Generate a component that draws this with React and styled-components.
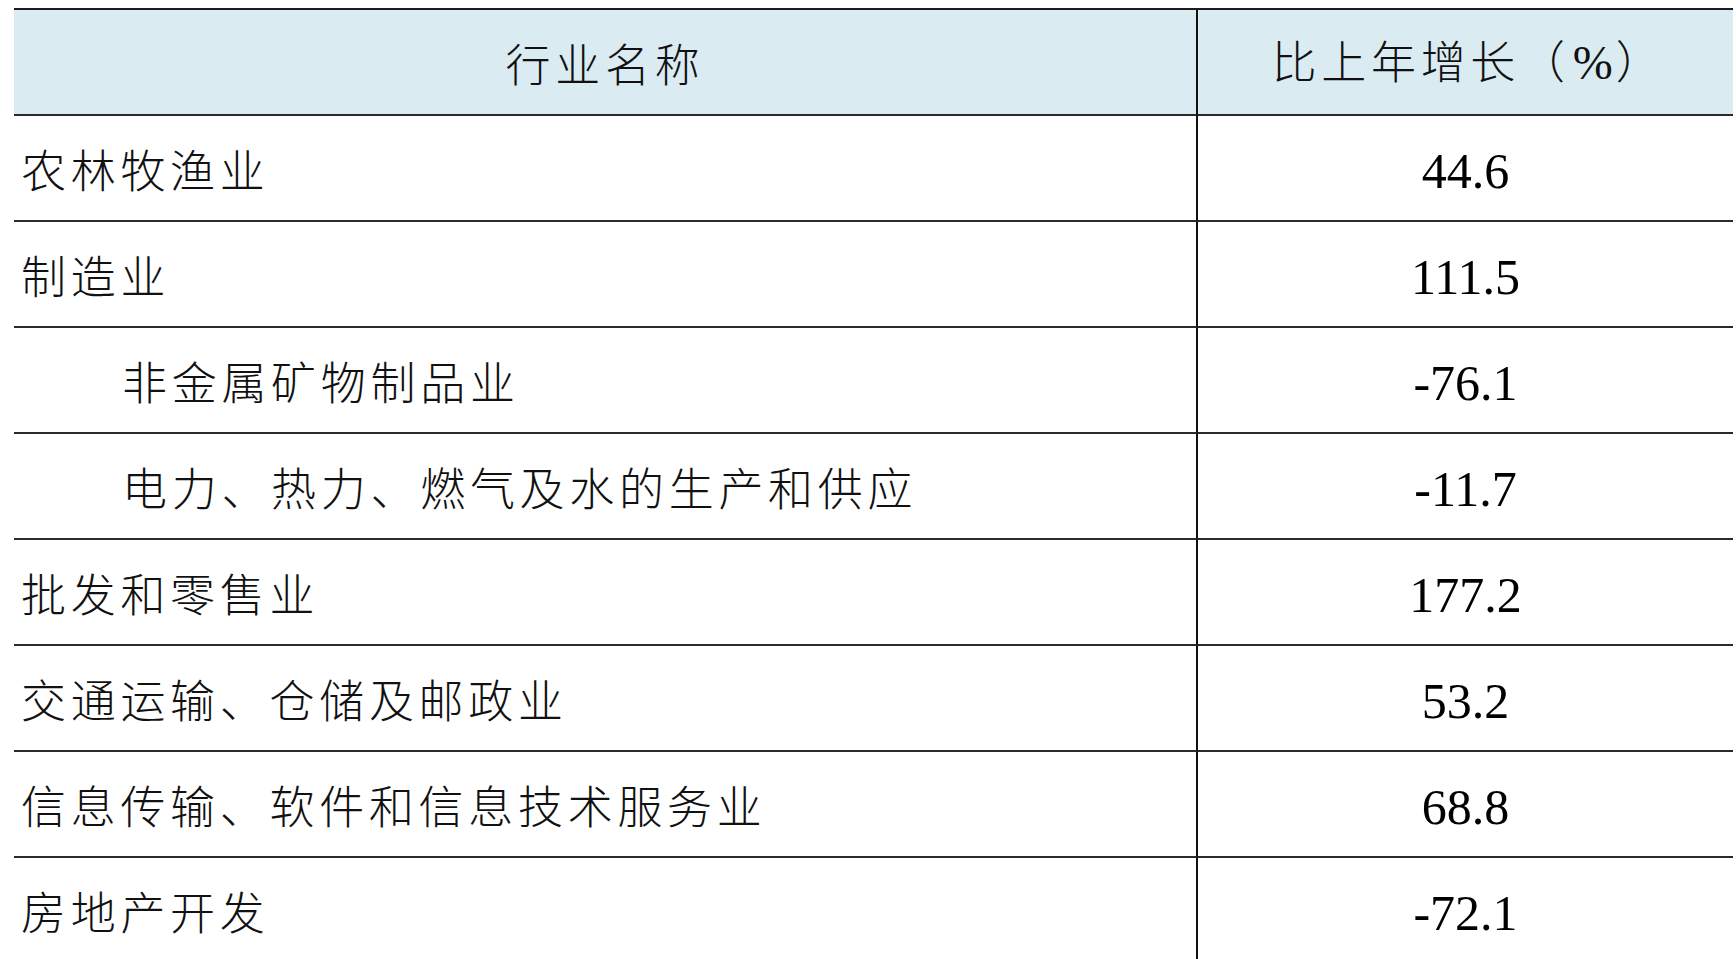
import styled, { createGlobalStyle } from "styled-components";

const GlobalStyle = createGlobalStyle`
  html, body {
    margin: 0;
    padding: 0;
    background: #ffffff;
  }
  body {
    font-family: "Liberation Serif", "Noto Sans CJK SC", serif;
    color: #000;
  }
`;

const Page = styled.div`
  padding: 8px 3px 0 14px;
  height: 959px;
  overflow: hidden;
  box-sizing: border-box;
`;

const Table = styled.div`
  display: grid;
  grid-template-columns: 1184px 1fr;
  border-top: 2px solid #1c1c1c;
`;

const Cell = styled.div`
  height: 106px;
  box-sizing: border-box;
  display: flex;
  align-items: center;
  justify-content: ${(p) => (p.$center ? "center" : "flex-start")};
  border-bottom: 2px solid #2a2a2a;
  background: ${(p) => (p.$head ? "#dbebf2" : "#ffffff")};
  min-width: 0;
`;

const NameCell = styled(Cell)`
  border-right: 2px solid #111;
  padding-left: ${(p) => (p.$head ? "0" : p.$indent ? "108px" : "7px")};
`;

const CnText = styled.span`
  font-family: "Noto Sans CJK SC", sans-serif;
  font-weight: 300;
  font-size: 45px;
  letter-spacing: 4.7px;
  line-height: 1;
  color: #111;
  white-space: nowrap;
`;

const HeadRight = styled(CnText)`
  margin-left: 6px;

  b {
    font-family: "Liberation Serif", serif;
    font-weight: 400;
    font-size: 48px;
    letter-spacing: 0;
    padding: 0 3px;
  }
`;

const Num = styled.span`
  font-family: "Liberation Serif", "Times New Roman", serif;
  font-size: 50px;
  line-height: 1;
  padding-top: 5px;
  color: #000;
`;

const rows = [
  { name: "农林牧渔业", value: "44.6" },
  { name: "制造业", value: "111.5" },
  { name: "非金属矿物制品业", value: "-76.1", indent: true },
  { name: "电力、热力、燃气及水的生产和供应", value: "-11.7", indent: true },
  { name: "批发和零售业", value: "177.2" },
  { name: "交通运输、仓储及邮政业", value: "53.2" },
  { name: "信息传输、软件和信息技术服务业", value: "68.8" },
  { name: "房地产开发", value: "-72.1" },
];

function Row({ name, value, indent }) {
  return (
    <>
      <NameCell $indent={indent}>
        <CnText>{name}</CnText>
      </NameCell>
      <Cell $center>
        <Num>{value}</Num>
      </Cell>
    </>
  );
}

export default function App() {
  return (
    <>
      <GlobalStyle />
      <Page>
        <Table>
          <NameCell $head $center>
            <CnText>行业名称</CnText>
          </NameCell>
          <Cell $head $center>
            <HeadRight>
              比上年增长（<b>%</b>）
            </HeadRight>
          </Cell>
          {rows.map((r) => (
            <Row key={r.name} {...r} />
          ))}
        </Table>
      </Page>
    </>
  );
}
